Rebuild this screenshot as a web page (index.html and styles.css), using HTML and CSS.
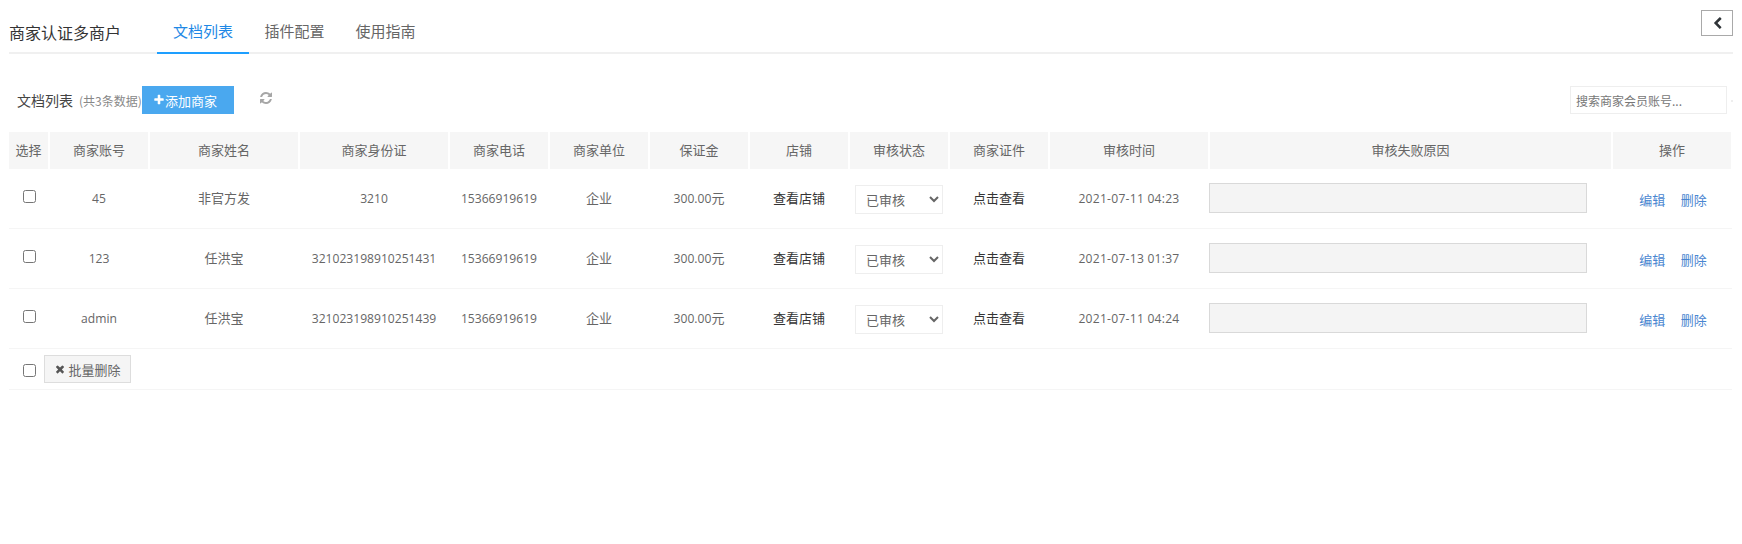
FILE: index.html
```html
<!DOCTYPE html>
<html lang="zh-CN">
<head>
<meta charset="utf-8">
<title>商家认证多商户</title>
<link rel="stylesheet" href="styles.css">
</head>
<body>
<header class="tabbar">
  <h1 class="title">商家认证多商户</h1>
  <ul class="tabs">
    <li class="tab active">文档列表</li>
    <li class="tab">插件配置</li>
    <li class="tab">使用指南</li>
  </ul>
  <button class="back" type="button" aria-label="返回"><svg class="back-icon" viewBox="0 0 1792 1792"><path d="M1427 301l-531 531 531 531q19 19 19 45t-19 45l-166 166q-19 19-45 19t-45-19l-742-742q-19-19-19-45t19-45l742-742q19-19 45-19t45 19l166 166q19 19 19 45t-19 45z"/></svg></button>
</header>
<section class="toolbar">
  <span class="list-title">文档列表</span>
  <span class="list-count">(共3条数据)</span>
  <button class="add" type="button"><svg class="add-icon" viewBox="0 0 1792 1792"><path d="M1600 736v192q0 40-28 68t-68 28h-416v416q0 40-28 68t-68 28h-192q-40 0-68-28t-28-68v-416h-416q-40 0-68-28t-28-68v-192q0-40 28-68t68-28h416v-416q0-40 28-68t68-28h192q40 0 68 28t28 68v416h416q40 0 68 28t28 68z"/></svg>添加商家</button>
  <svg class="refresh" viewBox="0 0 1792 1792"><path d="M1639 1056q0 5-1 7-64 268-268 434.5t-478 166.5q-146 0-282.5-55t-243.5-157l-129 129q-19 19-45 19t-45-19-19-45v-448q0-26 19-45t45-19h448q26 0 45 19t19 45-19 45l-137 137q71 66 161 102t187 36q134 0 250-65t186-179q11-17 53-117 8-23 30-23h192q13 0 22.5 9.5t9.5 22.5zm25-800v448q0 26-19 45t-45 19h-448q-26 0-45-19t-19-45 19-45l138-138q-148-137-349-137-134 0-250 65t-186 179q-11 17-53 117-8 23-30 23h-199q-13 0-22.5-9.5t-9.5-22.5v-7q65-268 270-434.5t480-166.5q146 0 284 55.5t245 156.5l130-129q19-19 45-19t45 19 19 45z"/></svg>
  <input class="search" type="text" placeholder="搜索商家会员账号...">
  <span class="search-dot"></span>
</section>
<table class="grid">
  <colgroup>
    <col class="c40"><col class="c100"><col class="c150"><col class="c150"><col class="c100"><col class="c100"><col class="c100"><col class="c100"><col class="c100"><col class="c100"><col class="c160"><col class="c403"><col class="c120">
  </colgroup>
  <thead>
    <tr><th>选择</th><th>商家账号</th><th>商家姓名</th><th>商家身份证</th><th>商家电话</th><th>商家单位</th><th>保证金</th><th>店铺</th><th>审核状态</th><th>商家证件</th><th>审核时间</th><th>审核失败原因</th><th>操作</th></tr>
  </thead>
  <tbody>
    <tr>
      <td><input class="check" type="checkbox"></td>
      <td><span class="num">45</span></td>
      <td>非官方发</td>
      <td><span class="num">3210</span></td>
      <td><span class="num">15366919619</span></td>
      <td>企业</td>
      <td><span class="num">300.00</span>元</td>
      <td class="dark">查看店铺</td>
      <td><select class="status"><option>已审核</option></select></td>
      <td class="dark">点击查看</td>
      <td><span class="num date">2021-07-11 04:23</span></td>
      <td class="reason-cell"><input class="reason" type="text" disabled></td>
      <td class="ops"><a class="op">编辑</a><a class="op">删除</a></td>
    </tr>
    <tr>
      <td><input class="check" type="checkbox"></td>
      <td><span class="num">123</span></td>
      <td>任洪宝</td>
      <td><span class="num">321023198910251431</span></td>
      <td><span class="num">15366919619</span></td>
      <td>企业</td>
      <td><span class="num">300.00</span>元</td>
      <td class="dark">查看店铺</td>
      <td><select class="status"><option>已审核</option></select></td>
      <td class="dark">点击查看</td>
      <td><span class="num date">2021-07-13 01:37</span></td>
      <td class="reason-cell"><input class="reason" type="text" disabled></td>
      <td class="ops"><a class="op">编辑</a><a class="op">删除</a></td>
    </tr>
    <tr>
      <td><input class="check" type="checkbox"></td>
      <td><span class="num">admin</span></td>
      <td>任洪宝</td>
      <td><span class="num">321023198910251439</span></td>
      <td><span class="num">15366919619</span></td>
      <td>企业</td>
      <td><span class="num">300.00</span>元</td>
      <td class="dark">查看店铺</td>
      <td><select class="status"><option>已审核</option></select></td>
      <td class="dark">点击查看</td>
      <td><span class="num date">2021-07-11 04:24</span></td>
      <td class="reason-cell"><input class="reason" type="text" disabled></td>
      <td class="ops"><a class="op">编辑</a><a class="op">删除</a></td>
    </tr>
    <tr class="batch-row">
      <td colspan="13">
        <div class="batch">
          <input class="check batch-check" type="checkbox">
          <button class="batch-del" type="button"><svg class="del-icon" viewBox="0 0 1792 1792"><path d="M1490 1322q0 40-28 68l-136 136q-28 28-68 28t-68-28l-294-294-294 294q-28 28-68 28t-68-28l-136-136q-28-28-28-68t28-68l294-294-294-294q-28-28-28-68t28-68l136-136q28-28 68-28t68 28l294 294 294-294q28-28 68-28t68 28l136 136q28 28 28 68t-28 68l-294 294 294 294q28 28 28 68z"/></svg>批量删除</button>
        </div>
      </td>
    </tr>
  </tbody>
</table>
</body>
</html>
```

FILE: styles.css
```css
* { box-sizing: border-box; }
html, body { margin: 0; padding: 0; background: #fff; }
body {
  font-family: "Noto Sans CJK SC", "Open Sans", sans-serif;
  font-size: 13px;
  color: #666;
  height: 544px;
  overflow: hidden;
}
.tabbar {
  display: flex;
  align-items: flex-start;
  margin: 0 9px;
  padding-top: 10px;
  height: 54px;
  border-bottom: 2px solid #f0f0f0;
}
.title {
  margin: 2px 33px 0 0;
  font-size: 16px;
  font-weight: 400;
  line-height: 40px;
  color: #333;
  width: 115px;
}
.tabs { display: flex; list-style: none; margin: 2px 0 0; padding: 0; }
.tab {
  width: 91px;
  height: 42px;
  line-height: 38px;
  font-size: 15px;
  text-align: center;
  color: #666;
}
.tab.active { width: 92px; color: #1e88e5; border-bottom: 2px solid #1e9fff; }
.back {
  margin-left: auto;
  width: 32px;
  height: 26px;
  padding: 0;
  border: 1px solid #a9a9a9;
  background: #fff;
  display: flex;
  align-items: center;
  justify-content: center;
}
.back-icon { width: 13px; height: 13px; fill: #2f3438; }
.toolbar {
  display: flex;
  align-items: center;
  height: 28px;
  margin-top: 32px;
  padding-left: 17px;
  position: relative;
}
.list-title { font-size: 14px; color: #444; width: 62px; }
.list-count { font-size: 12px; color: #888; width: 63px; white-space: nowrap; }
.add {
  width: 92px;
  height: 28px;
  border: 0;
  padding: 0 0 0 11px;
  background: #4aa8ef;
  color: #fff;
  font: inherit;
  font-size: 13px;
  display: flex;
  align-items: center;
  justify-content: flex-start;
}
.add-icon { width: 12px; height: 12px; fill: #fff; }
.refresh { width: 14px; height: 14px; margin-left: 25px; margin-top: -4px; fill: #a6a6a6; }
.search {
  margin-left: auto;
  margin-right: 15px;
  width: 157px;
  height: 28px;
  border: 1px solid #eee;
  padding: 0 5px;
  font: inherit;
  font-size: 12px;
  color: #666;
  outline: 0;
}
.search::placeholder { color: #777; }
.search-dot {
  position: absolute;
  left: 1731px;
  top: 14px;
  width: 2px;
  height: 2px;
  background: #eee;
}
.grid {
  width: 1723px;
  margin: 17px 0 0 9px;
  table-layout: fixed;
  border-collapse: separate;
  border-spacing: 0;
}
.c40 { width: 40px; }
.c100 { width: 100px; }
.c150 { width: 150px; }
.c160 { width: 160px; }
.c403 { width: 403px; }
.c120 { width: 120px; }
.grid th {
  height: 38px;
  padding: 0 0 2px;
  background: #f6f6f6;
  background-clip: padding-box;
  border: 1px solid #fff;
  border-bottom: 0;
  font-weight: 400;
  font-size: 13px;
  color: #666;
  text-align: center;
}
.grid th:first-child { border-left: 0; }
.grid td {
  height: 60px;
  padding: 0 0 2px;
  text-align: center;
  border-bottom: 1px solid #f5f5f5;
  color: #666;
}
.num { font-family: "Open Sans", sans-serif; font-size: 12.1px; }
.date { letter-spacing: 0.25px; }
.dark { color: #333 !important; }
.check { margin: 0 0 5px; vertical-align: middle; width: 13px; height: 13px; }
.status {
  display: block;
  width: 88px;
  height: 29px;
  margin: 4px auto 0;
  padding: 0 6px;
  border: 1px solid #eee;
  background: #fff;
  font: inherit;
  font-size: 13px;
  color: #666;
  outline: 0;
}
.reason-cell { text-align: left !important; }
.reason {
  display: block;
  width: 378px;
  height: 30px;
  margin-top: 0;
  border: 1px solid #d9d9d9;
  background: #f4f4f4;
}
.op { color: #4a86d0; margin: 0 7.5px; position: relative; top: 2px; }
.ops { padding-left: 2px !important; }
.op + .op { margin-left: 8px; }
.batch-row td { height: 41px; text-align: left; padding: 0; }
.batch { display: flex; align-items: center; padding-left: 14px; }
.batch-check { margin: 3px 8px 0 0; }
.batch-del {
  width: 87px;
  height: 28px;
  padding: 0;
  border: 1px solid #ddd;
  background: #f5f5f5;
  color: #666;
  font: inherit;
  font-size: 13px;
  display: flex;
  align-items: center;
  justify-content: center;
}
.del-icon { width: 12px; height: 12px; fill: #555; margin-right: 2px; }
```
